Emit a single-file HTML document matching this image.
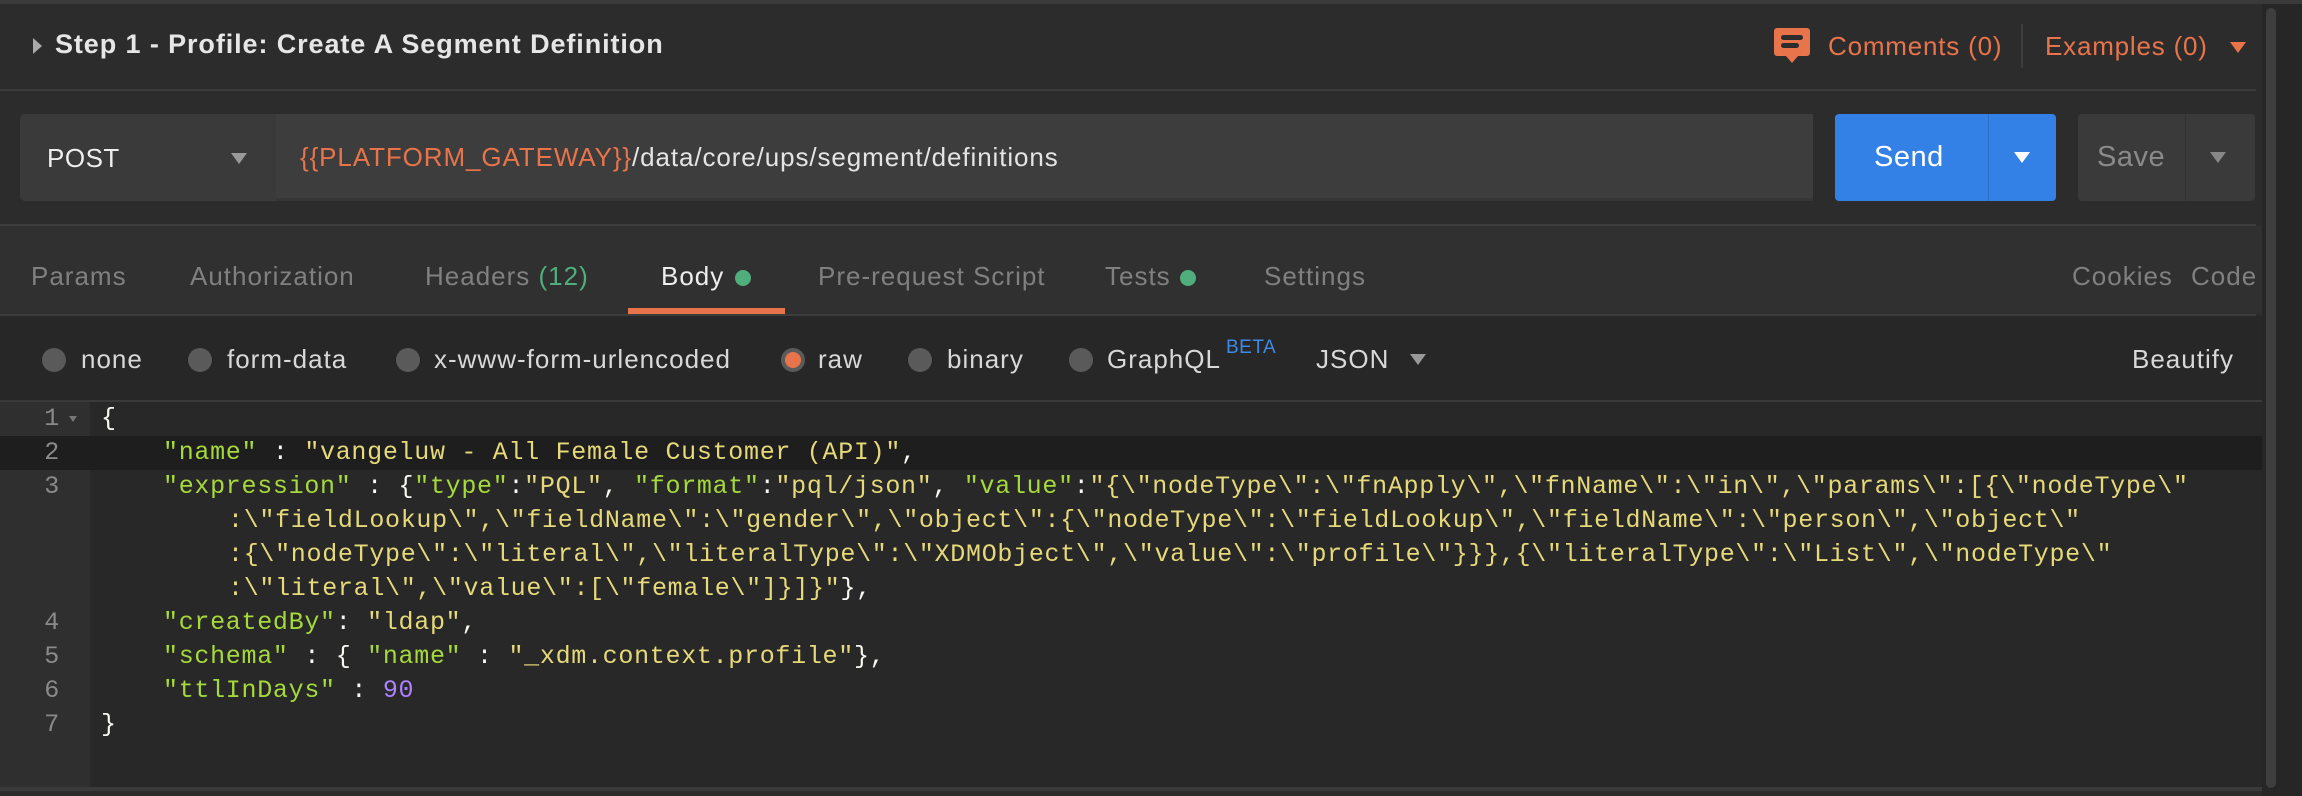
<!DOCTYPE html>
<html><head><meta charset="utf-8"><style>
*{margin:0;padding:0;box-sizing:border-box}
body{width:2302px;height:796px;background:#2c2c2c;font-family:"Liberation Sans",sans-serif;position:relative;overflow:hidden;color:#ddd}
.a{position:absolute;white-space:nowrap}
.or{color:#e8744b}
.tab{font-size:26px;letter-spacing:1px;color:#808080;top:261px}
.rad{width:24px;height:24px;border-radius:50%;background:#5a5a5a;top:348px}
.rl{font-size:26px;letter-spacing:1px;color:#d8d8d8;top:344px}
.code{font-family:"Liberation Mono",monospace;font-size:25px;letter-spacing:0.7px;color:#f8f8f2;line-height:34px}
.k{color:#a6d93a}.s{color:#e6d97a}.n{color:#ae81ff}
.ln{font-family:"Liberation Mono",monospace;font-size:25px;color:#8a8a8a;width:60px;text-align:right;left:0}
</style></head><body>
<div class="a" style="left:0;top:0;width:2302px;height:4px;background:#3a3a3a"></div>
<div class="a" style="left:0;top:89px;width:2256px;height:2px;background:#3c3c3c"></div>
<div class="a" style="left:2262px;top:4px;width:40px;height:792px;background:#262626"></div>
<div class="a" style="left:2266px;top:8px;width:10px;height:780px;border-radius:5px;background:#3e3e3e"></div>
<!-- title -->
<div class="a" style="left:33px;top:38px;width:0;height:0;border-top:8px solid transparent;border-bottom:8px solid transparent;border-left:9px solid #aaa"></div>
<div class="a" style="left:55px;top:29px;font-size:27px;letter-spacing:0.9px;font-weight:bold;color:#e6e6e6">Step 1 - Profile: Create A Segment Definition</div>
<svg class="a" style="left:1774px;top:28px" width="36" height="36" viewBox="0 0 36 36"><path d="M3 0h30a3 3 0 0 1 3 3v22a3 3 0 0 1-3 3H24l-6 7-6-7H3a3 3 0 0 1-3-3V3a3 3 0 0 1 3-3z" fill="#e8744b"/><rect x="7" y="7" width="22" height="5" rx="2.5" fill="#2c2c2c"/><rect x="7" y="15" width="18" height="5" rx="2.5" fill="#2c2c2c"/></svg>
<div class="a or" style="left:1828px;top:31px;font-size:26px;letter-spacing:0.8px">Comments (0)</div>
<div class="a" style="left:2021px;top:24px;width:2px;height:44px;background:#3e3e3e"></div>
<div class="a or" style="left:2045px;top:31px;font-size:26px;letter-spacing:0.8px">Examples (0)</div>
<div class="a" style="left:2230px;top:42px;border-left:8px solid transparent;border-right:8px solid transparent;border-top:11px solid #e8744b"></div>
<!-- url row -->
<div class="a" style="left:20px;top:114px;width:256px;height:87px;background:#3a3a3a;border-radius:5px 0 0 5px"></div>
<div class="a" style="left:47px;top:143px;font-size:26px;letter-spacing:0.5px;color:#eee">POST</div>
<div class="a" style="left:231px;top:153px;border-left:8px solid transparent;border-right:8px solid transparent;border-top:11px solid #999"></div>
<div class="a" style="left:276px;top:114px;width:1537px;height:87px;background:#3d3d3d;border-bottom:3px solid #353535"></div>
<div class="a" style="left:300px;top:142px;font-size:26px;letter-spacing:0.9px;color:#e4e4e4"><span class="or">{{PLATFORM_GATEWAY}}</span>/data/core/ups/segment/definitions</div>
<div class="a" style="left:1835px;top:114px;width:221px;height:87px;background:#3380e6;border-radius:4px"></div>
<div class="a" style="left:1988px;top:114px;width:1px;height:87px;background:#2b6fcc"></div>
<div class="a" style="left:1874px;top:141px;font-size:29px;letter-spacing:0.5px;color:#fff">Send</div>
<div class="a" style="left:2014px;top:152px;border-left:8px solid transparent;border-right:8px solid transparent;border-top:11px solid #fff"></div>
<div class="a" style="left:2078px;top:114px;width:177px;height:87px;background:#3a3a3a;border-radius:4px"></div>
<div class="a" style="left:2185px;top:114px;width:1px;height:87px;background:#333"></div>
<div class="a" style="left:2097px;top:141px;font-size:29px;letter-spacing:0.5px;color:#8a8a8a">Save</div>
<div class="a" style="left:2210px;top:152px;border-left:8px solid transparent;border-right:8px solid transparent;border-top:11px solid #888"></div>
<div class="a" style="left:0;top:224px;width:2256px;height:2px;background:#3c3c3c"></div>
<!-- tabs -->
<div class="a" style="left:0;top:226px;width:2262px;height:88px;background:#303030"></div>
<div class="a tab" style="left:31px">Params</div>
<div class="a tab" style="left:190px">Authorization</div>
<div class="a tab" style="left:425px">Headers <span style="color:#4fae7c">(12)</span></div>
<div class="a tab" style="left:661px;color:#eee">Body</div>
<div class="a" style="left:735px;top:270px;width:16px;height:16px;border-radius:50%;background:#4fae7c"></div>
<div class="a tab" style="left:818px">Pre-request Script</div>
<div class="a tab" style="left:1105px">Tests</div>
<div class="a" style="left:1180px;top:270px;width:16px;height:16px;border-radius:50%;background:#4fae7c"></div>
<div class="a tab" style="left:1264px">Settings</div>
<div class="a tab or" style="left:2072px">Cookies</div>
<div class="a tab or" style="left:2191px">Code</div>
<div class="a" style="left:628px;top:308px;width:157px;height:6px;background:#e8744b"></div>
<div class="a" style="left:0;top:314px;width:2256px;height:2px;background:#3c3c3c"></div>
<!-- body options -->
<div class="a" style="left:0;top:316px;width:2262px;height:84px;background:#272727"></div>
<div class="a rad" style="left:42px"></div><div class="a rl" style="left:81px">none</div>
<div class="a rad" style="left:188px"></div><div class="a rl" style="left:227px">form-data</div>
<div class="a rad" style="left:396px"></div><div class="a rl" style="left:434px">x-www-form-urlencoded</div>
<div class="a rad" style="left:781px;background:#e8744b;border:4px solid #5a5a5a"></div><div class="a rl" style="left:818px">raw</div>
<div class="a rad" style="left:908px"></div><div class="a rl" style="left:947px">binary</div>
<div class="a rad" style="left:1069px"></div><div class="a rl" style="left:1107px">GraphQL</div>
<div class="a" style="left:1226px;top:337px;font-size:19px;letter-spacing:0.5px;color:#3d8ae8">BETA</div>
<div class="a rl or" style="left:1316px">JSON</div>
<div class="a" style="left:1410px;top:354px;border-left:8px solid transparent;border-right:8px solid transparent;border-top:11px solid #999"></div>
<div class="a rl or" style="left:2132px">Beautify</div>
<!-- editor -->
<div class="a" style="left:0;top:400px;width:2262px;height:2px;background:#3a3a3a"></div>
<div class="a" style="left:0;top:402px;width:2262px;height:385px;background:#282828"></div>
<div class="a" style="left:0;top:402px;width:90px;height:385px;background:#2f2f2f"></div>
<div class="a" style="left:0;top:436px;width:2262px;height:34px;background:#1e1e1e"></div>
<div class="a" style="left:0;top:787px;width:2262px;height:4px;background:#3a3a3a"></div>
<div class="a ln code" style="top:402px;width:60px;color:#8a8a8a">1</div>
<div class="a" style="left:69px;top:416px;border-left:4px solid transparent;border-right:4px solid transparent;border-top:6px solid #777"></div>
<div class="a ln code" style="top:436px">2</div>
<div class="a ln code" style="top:470px">3</div>
<div class="a ln code" style="top:606px">4</div>
<div class="a ln code" style="top:640px">5</div>
<div class="a ln code" style="top:674px">6</div>
<div class="a ln code" style="top:708px">7</div>
<div class="a code" style="left:101px;top:402px">{</div>
<div class="a code" style="left:163px;top:436px"><span class="k">"name"</span> : <span class="s">"vangeluw - All Female Customer (API)"</span>,</div>
<div class="a code" style="left:163px;top:470px"><span class="k">"expression"</span> : {<span class="k">"type"</span>:<span class="s">"PQL"</span>, <span class="k">"format"</span>:<span class="s">"pql/json"</span>, <span class="k">"value"</span>:<span class="s">"{\"nodeType\":\"fnApply\",\"fnName\":\"in\",\"params\":[{\"nodeType\"</span></div>
<div class="a code s" style="left:228px;top:504px">:\"fieldLookup\",\"fieldName\":\"gender\",\"object\":{\"nodeType\":\"fieldLookup\",\"fieldName\":\"person\",\"object\"</div>
<div class="a code s" style="left:228px;top:538px">:{\"nodeType\":\"literal\",\"literalType\":\"XDMObject\",\"value\":\"profile\"}}},{\"literalType\":\"List\",\"nodeType\"</div>
<div class="a code" style="left:228px;top:572px"><span class="s">:\"literal\",\"value\":[\"female\"]}]}"</span>},</div>
<div class="a code" style="left:163px;top:606px"><span class="k">"createdBy"</span>: <span class="s">"ldap"</span>,</div>
<div class="a code" style="left:163px;top:640px"><span class="k">"schema"</span> : { <span class="k">"name"</span> : <span class="s">"_xdm.context.profile"</span>},</div>
<div class="a code" style="left:163px;top:674px"><span class="k">"ttlInDays"</span> : <span class="n">90</span></div>
<div class="a code" style="left:101px;top:708px">}</div>
</body></html>
